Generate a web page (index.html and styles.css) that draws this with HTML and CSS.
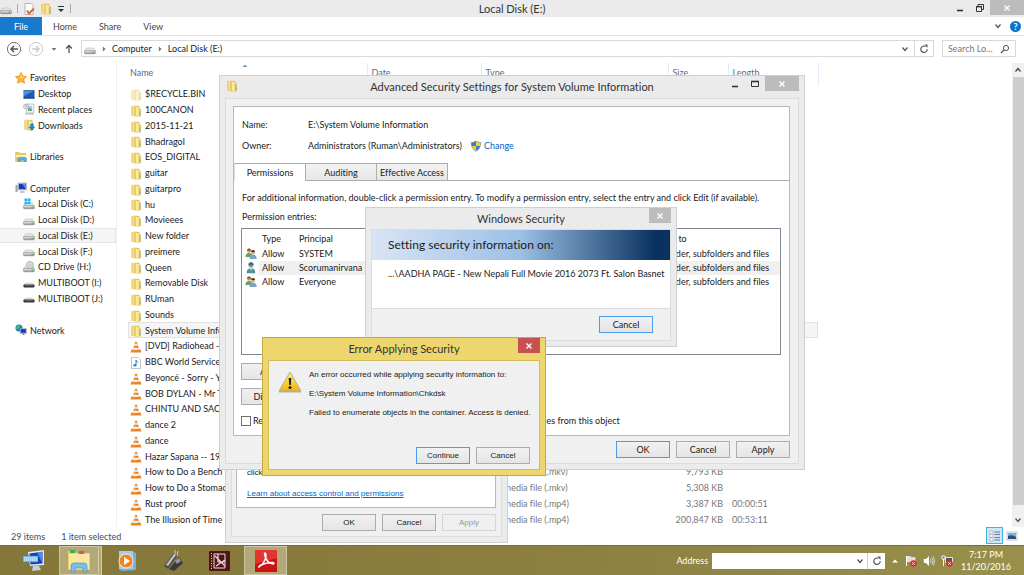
FILE: index.html
```html
<!DOCTYPE html>
<html lang="en">
<head>
<meta charset="utf-8">
<title>Local Disk (E:)</title>
<link rel="stylesheet" href="styles.css">
</head>
<body>
<svg class="sprite" aria-hidden="true">
  <defs>
    <linearGradient id="gold" x1="0" x2="1"><stop offset="0" stop-color="#e0b840"/><stop offset=".5" stop-color="#f9e79c"/><stop offset="1" stop-color="#dfbd55"/></linearGradient>
    <linearGradient id="metal" x1="0" x2="0" y1="0" y2="1"><stop offset="0" stop-color="#f4f4f4"/><stop offset="1" stop-color="#8d8d8d"/></linearGradient>
    <linearGradient id="cone" x1="0" x2="1"><stop offset="0" stop-color="#f9a13b"/><stop offset="1" stop-color="#dd6408"/></linearGradient>
    <linearGradient id="warn" x1="0" x2="0" y1="0" y2="1"><stop offset="0" stop-color="#fff27a"/><stop offset="1" stop-color="#f3b600"/></linearGradient>
  </defs>
  <symbol id="folder" viewBox="0 0 12 12"><path d="M1.500 1L5 .5v11l-3.500-.7z" fill="url(#gold)"/><path d="M5 .8h4.500v10.700H5z" fill="#e3c258"/><path d="M5.700 1.600l3 .6v8.600l-3 .6z" fill="#f8e8a4"/><path d="M9.200 3.500h1.600V11L9.200 11.500z" fill="#d9b554"/><path d="M9.800 7.500h1V9.500h-1z" fill="#8fb58a"/></symbol>
  <symbol id="drive" viewBox="0 0 12 12"><path d="M2.500 5h7L11.500 8H.5z" fill="#e9e9e9" stroke="#a8a8a8" stroke-width=".5"/><rect x=".5" y="7.500" width="11" height="3.300" rx="1" fill="url(#metal)" stroke="#7d7d7d" stroke-width=".5"/><path d="M8.500 8.700h2v1h-2z" fill="#37b34a"/></symbol>
  <symbol id="windrive" viewBox="0 0 12 12"><use href="#drive"/><path d="M1.500 .5h2.700v2.600H1.500zM4.700.5h2.800v2.600H4.700zM1.500 3.600h2.700v2.600H1.500zM4.700 3.600h2.800v2.600H4.700z" fill="#1fb3e8"/></symbol>
  <symbol id="cd" viewBox="0 0 12 12"><use href="#drive"/><circle cx="7" cy="4" r="3.500" fill="#d8dcdc" stroke="#8f9696" stroke-width=".6"/><circle cx="7" cy="4" r="1" fill="#fff" stroke="#8a8" stroke-width=".5"/></symbol>
  <symbol id="usb" viewBox="0 0 12 12"><path d="M2.500 5.500h7L11.500 8H.5z" fill="#ddd"/><rect x=".5" y="7.500" width="11" height="3" rx=".8" fill="#383838"/><path d="M2 8.500h8" stroke="#888" stroke-width=".5"/></symbol>
  <symbol id="star" viewBox="0 0 12 12"><path d="M6 .5l1.700 3.600 3.900.5-2.900 2.700.8 4L6 9.400l-3.500 1.900.8-4L.4 4.600l3.900-.5z" fill="#ffb52d" stroke="#ea8418" stroke-width=".7"/><path d="M6 2l1 3 3 .4-5 1z" fill="#ffe07c"/></symbol>
  <symbol id="desk" viewBox="0 0 12 12"><path d="M.5 2h11v8.500H.5z" fill="#215aab"/><path d="M1 2.500h10L1 8z" fill="#4f8edc"/><path d="M.5 9.500h11v1H.5z" fill="#143c7c"/></symbol>
  <symbol id="recent" viewBox="0 0 12 12"><path d="M3 1h8l-.5 9H3.500z" fill="#eef4fa" stroke="#9aa6b2" stroke-width=".6"/><path d="M5 3h4v5H5z" fill="#a9c7e5"/><path d="M5 6l2-1 2 2v1H5z" fill="#76a272"/><circle cx="3" cy="3.500" r="2.500" fill="#e4e9ee" stroke="#888" stroke-width=".5"/><path d="M3 2v1.700h1.200M2 11h9" stroke="#777" stroke-width=".6" fill="none"/></symbol>
  <symbol id="down" viewBox="0 0 12 12"><use href="#folder"/><path d="M7.500 5h2.500v3h1.800L8.700 11.500 5.700 8h1.800z" fill="#1c8ddb" stroke="#0b64a8" stroke-width=".4"/></symbol>
  <symbol id="libs" viewBox="0 0 12 12"><path d="M.7 1.500h3.500l1 1h5.500v8H.7z" fill="#eccb60" stroke="#c8a23a" stroke-width=".5"/><path d="M1 4h10.500v2H1z" fill="#fff2b4"/><path d="M3 7c2-1 6-1 8.500 0v3.500H9V9H5.500v1.500H3z" fill="#5aaee2" stroke="#2e7fb9" stroke-width=".4"/></symbol>
  <symbol id="pc" viewBox="0 0 12 12"><path d="M.5 3h2v7h-2z" fill="#9ba3ab"/><path d="M3 1h8.500v7H3z" fill="#d9dee6" stroke="#8a8f98" stroke-width=".5"/><path d="M3.800 1.800h7v5.400h-7z" fill="#1b35b8"/><path d="M7 1.800h3.800v5.400z" fill="#5f87ee"/><path d="M5 9.500h4.500v1H5z" fill="#999"/></symbol>
  <symbol id="net" viewBox="0 0 12 12"><circle cx="4" cy="4" r="3.500" fill="#1c7bd2"/><path d="M1.500 2.500Q3 .8 4.700 1l.6 1.500L3 5 1 5zM4 6l2-1v2z" fill="#4fc252"/><path d="M5 4.500h6.500v5H5z" fill="#cfd7e2" stroke="#7b8796" stroke-width=".4"/><path d="M5.700 5.100h5.200v3.700H5.700z" fill="#1735be"/><path d="M7.500 9.500h2v1.500h-2z" fill="#7a8592"/></symbol>
  <symbol id="vlc" viewBox="0 0 12 12"><path d="M1.500 8.500h9l1 3H.5z" fill="#f0861c"/><path d="M5.200.8h1.600L9.500 9.200Q6 10.800 2.500 9.200z" fill="url(#cone)"/><path d="M4.600 2.800h2.800l.7 2H3.900zM3.200 6.800h5.600l.6 1.700Q6 9.600 2.600 8.500z" fill="#eef0f2"/></symbol>
  <symbol id="music" viewBox="0 0 12 12"><path d="M1.500.6h7l2 2v8.900h-9z" fill="#fff" stroke="#999" stroke-width=".6"/><path d="M6 3v5M6 3q.3 1.500 2 2.500" stroke="#1789d6" stroke-width="1" fill="none"/><ellipse cx="4.900" cy="8.300" rx="1.500" ry="1.200" fill="#1789d6"/></symbol>
  <symbol id="group" viewBox="0 0 12 12"><circle cx="4" cy="2.800" r="2" fill="#c79c6b"/><path d="M2 2.500Q2 .5 4 .5t2 2z" fill="#6d5125"/><path d="M.5 9Q.5 5 4 5t3.500 4z" fill="#6aa05c"/><circle cx="8" cy="4.300" r="2" fill="#d7a67a"/><path d="M6 4Q6 2 8 2t2 2z" fill="#4c3524"/><path d="M4.500 11Q4.500 6.600 8 6.600T11.700 11z" fill="#7ba0c9"/></symbol>
  <symbol id="user" viewBox="0 0 12 12"><circle cx="6" cy="3" r="2.500" fill="#7c9ca0"/><path d="M3.500 3Q3.300.3 6 .3T8.500 3z" fill="#47686e"/><path d="M1.700 11.300Q1.500 6.300 6 6.300t4.300 5z" fill="#4f9490"/><path d="M5 6.300h2L6 9z" fill="#e5efef"/></symbol>
  <symbol id="shield" viewBox="0 0 12 12"><path d="M6 .4Q8.500 2 11.300 2 11.500 8.500 6 11.700.5 8.500.7 2 3.500 2 6 .4z" fill="#9ba2a8"/><path d="M6 1.600V6H1.900Q1.600 4.500 1.700 2.900 4 2.800 6 1.600zM6 6h4.100Q9.300 8.800 6 10.600z" fill="#2b7fd8"/><path d="M6 1.600V6h4.100q.4-1.500.2-3.100Q8 2.800 6 1.600zM6 6H1.900Q2.700 8.800 6 10.600z" fill="#f6cf2c"/></symbol>
  <symbol id="close" viewBox="0 0 8 8"><path d="M1.500 1.500l5 5m0-5l-5 5" stroke="#fff" stroke-width="1.400" fill="none"/></symbol>
  <symbol id="min" viewBox="0 0 10 10"><path d="M2 7.500h6" stroke="currentColor" stroke-width="1.600"/></symbol>
  <symbol id="max" viewBox="0 0 10 10"><path d="M1.500 2.500h7v5h-7z" fill="none" stroke="currentColor"/><path d="M1 2.500h8" stroke="currentColor" stroke-width="1.600"/></symbol>
  <symbol id="restore" viewBox="0 0 10 10"><path d="M1.500 3.500h5v5h-5zM3 3V1.500h5.500v5H7" fill="none" stroke="currentColor"/><path d="M1 3.700h6" stroke="currentColor" stroke-width="1.400"/></symbol>
  <symbol id="chev" viewBox="0 0 8 8"><path d="M1.500 2.500L4 5.500l2.500-3" fill="none" stroke="currentColor" stroke-width="1.300"/></symbol>
  <symbol id="tri" viewBox="0 0 8 8"><path d="M1.500 3h5L4 5.800z" fill="currentColor"/></symbol>
  <symbol id="crumb" viewBox="0 0 8 8"><path d="M2.800 1.500L5.600 4 2.800 6.500z" fill="currentColor"/></symbol>
  <symbol id="refresh" viewBox="0 0 10 10"><path d="M8.200 5.200A3.200 3.200 0 1 1 6.500 2.400" fill="none" stroke="currentColor" stroke-width="1.200"/><path d="M5.500.5h3v3.200z" fill="currentColor"/></symbol>
  <symbol id="badge" viewBox="0 0 12 12"><circle cx="8.500" cy="8.500" r="3.200" fill="#e02b25"/><path d="M7.300 7.300l2.400 2.400m0-2.400L7.300 9.700" stroke="#fff" stroke-width=".9"/></symbol>
</svg>

<div class="desktop">
  <main class="explorer">
    <header class="titlebar">
      <div class="quick">
        <svg class="i12"><use href="#drive"/></svg><i class="bar"></i>
        <svg class="i12" viewBox="0 0 12 12"><path d="M2 .5h6l2 2v9H2z" fill="#fff" stroke="#999" stroke-width=".7"/><path d="M4 7.500l2 3 5-5" fill="none" stroke="#e8622c" stroke-width="2"/></svg>
        <svg class="i12"><use href="#folder"/></svg>
        <svg class="i8" viewBox="0 0 8 8"><path d="M1 1.500h6" stroke="#333"/><path d="M1 4h6L4 7z" fill="#333"/></svg><i class="bar"></i>
      </div>
      <h1>Local Disk (E:)</h1>
      <div class="winbtns">
        <button aria-label="Minimize"><svg class="i10"><use href="#min"/></svg></button>
        <button aria-label="Restore"><svg class="i10"><use href="#restore"/></svg></button>
        <button class="x wide" aria-label="Close"><svg class="i8"><use href="#close"/></svg></button>
      </div>
    </header>
    <nav class="ribbon">
      <button class="file">File</button><button>Home</button><button>Share</button><button>View</button>
      <span class="ribbon-end"><svg class="i8"><use href="#chev"/></svg><button class="help" aria-label="Help">?</button></span>
    </nav>
    <div class="addressbar">
      <div class="arrows">
        <svg class="i16" viewBox="0 0 16 16"><circle cx="8" cy="8" r="6.600" fill="none" stroke="#747474"/><path d="M12 8H5m3-3L5 8l3 3" fill="none" stroke="#555" stroke-width="1.500"/></svg>
        <svg class="i16" viewBox="0 0 16 16"><circle cx="8" cy="8" r="6.600" fill="none" stroke="#ccc"/><path d="M4 8h7M8 5l3 3-3 3" fill="none" stroke="#ccc" stroke-width="1.500"/></svg>
        <svg class="i8 grey"><use href="#tri"/></svg>
        <svg class="i10" viewBox="0 0 10 10"><path d="M5 9V1.500M2 4.500l3-3 3 3" fill="none" stroke="#555" stroke-width="1.300"/></svg>
      </div>
      <div class="path">
        <svg class="i12"><use href="#drive"/></svg><svg class="i8 grey"><use href="#crumb"/></svg><a href="#computer">Computer</a><svg class="i8 grey"><use href="#crumb"/></svg><a href="#e">Local Disk (E:)</a>
        <span class="path-end"><svg class="i8"><use href="#chev"/></svg><button aria-label="Refresh"><svg class="i10"><use href="#refresh"/></svg></button></span>
      </div>
      <label class="search"><input type="text" placeholder="Search Lo..." aria-label="Search Local Disk (E:)"><svg class="i10" viewBox="0 0 10 10"><circle cx="6" cy="4" r="2.600" fill="none" stroke="#555"/><path d="M4 6L1 9" stroke="#555" stroke-width="1.300"/></svg></label>
    </div>
    <div class="content">
      <nav class="tree">
        <a class="root" href="#fav"><svg class="i12"><use href="#star"/></svg>Favorites</a>
        <a href="#desktop"><svg class="i12"><use href="#desk"/></svg>Desktop</a>
        <a href="#recent-places"><svg class="i12"><use href="#recent"/></svg>Recent places</a>
        <a href="#downloads"><svg class="i12"><use href="#down"/></svg>Downloads</a>
        <i></i>
        <a class="root" href="#libraries"><svg class="i12"><use href="#libs"/></svg>Libraries</a>
        <i></i>
        <a class="root" href="#computer"><svg class="i12"><use href="#pc"/></svg>Computer</a>
        <a href="#c"><svg class="i12"><use href="#windrive"/></svg>Local Disk (C:)</a>
        <a href="#d"><svg class="i12"><use href="#drive"/></svg>Local Disk (D:)</a>
        <a class="current" href="#e"><svg class="i12"><use href="#drive"/></svg>Local Disk (E:)</a>
        <a href="#f"><svg class="i12"><use href="#drive"/></svg>Local Disk (F:)</a>
        <a href="#h"><svg class="i12"><use href="#cd"/></svg>CD Drive (H:)</a>
        <a href="#i"><svg class="i12"><use href="#usb"/></svg>MULTIBOOT (I:)</a>
        <a href="#j"><svg class="i12"><use href="#usb"/></svg>MULTIBOOT (J:)</a>
        <i></i>
        <a class="root" href="#network"><svg class="i12"><use href="#net"/></svg>Network</a>
      </nav>
      <div class="list">
        <table class="files">
          <colgroup><col class="c-name"><col class="c-date"><col class="c-type"><col class="c-size"><col class="c-len"></colgroup>
          <thead><tr><th class="sorted">Name<svg class="i8 sort" viewBox="0 0 8 8"><path d="M1.500 5h5L4 2.500z" fill="#6c9cc0"/></svg></th><th>Date</th><th>Type</th><th>Size</th><th>Length</th></tr></thead>
          <tbody>
            <tr class="faded"><td><svg class="i12"><use href="#folder"/></svg>$RECYCLE.BIN</td><td></td><td></td><td></td><td></td></tr>
            <tr><td><svg class="i12"><use href="#folder"/></svg>100CANON</td><td></td><td></td><td></td><td></td></tr>
            <tr><td><svg class="i12"><use href="#folder"/></svg>2015-11-21</td><td></td><td></td><td></td><td></td></tr>
            <tr><td><svg class="i12"><use href="#folder"/></svg>Bhadragol</td><td></td><td></td><td></td><td></td></tr>
            <tr><td><svg class="i12"><use href="#folder"/></svg>EOS_DIGITAL</td><td></td><td></td><td></td><td></td></tr>
            <tr><td><svg class="i12"><use href="#folder"/></svg>guitar</td><td></td><td></td><td></td><td></td></tr>
            <tr><td><svg class="i12"><use href="#folder"/></svg>guitarpro</td><td></td><td></td><td></td><td></td></tr>
            <tr><td><svg class="i12"><use href="#folder"/></svg>hu</td><td></td><td></td><td></td><td></td></tr>
            <tr><td><svg class="i12"><use href="#folder"/></svg>Movieees</td><td></td><td></td><td></td><td></td></tr>
            <tr><td><svg class="i12"><use href="#folder"/></svg>New folder</td><td></td><td></td><td></td><td></td></tr>
            <tr><td><svg class="i12"><use href="#folder"/></svg>preimere</td><td></td><td></td><td></td><td></td></tr>
            <tr><td><svg class="i12"><use href="#folder"/></svg>Queen</td><td></td><td></td><td></td><td></td></tr>
            <tr><td><svg class="i12"><use href="#folder"/></svg>Removable Disk</td><td></td><td></td><td></td><td></td></tr>
            <tr><td><svg class="i12"><use href="#folder"/></svg>RUman</td><td></td><td></td><td></td><td></td></tr>
            <tr><td><svg class="i12"><use href="#folder"/></svg>Sounds</td><td></td><td></td><td></td><td></td></tr>
            <tr class="selected"><td><svg class="i12"><use href="#folder"/></svg>System Volume Information</td><td></td><td></td><td></td><td></td></tr>
            <tr><td><svg class="i12"><use href="#vlc"/></svg>[DVD] Radiohead -</td><td></td><td></td><td></td><td></td></tr>
            <tr><td><svg class="i12"><use href="#music"/></svg>BBC World Service</td><td></td><td></td><td></td><td></td></tr>
            <tr><td><svg class="i12"><use href="#vlc"/></svg>Beyoncé - Sorry - Y</td><td></td><td></td><td></td><td></td></tr>
            <tr><td><svg class="i12"><use href="#vlc"/></svg>BOB DYLAN - Mr T</td><td></td><td></td><td></td><td></td></tr>
            <tr><td><svg class="i12"><use href="#vlc"/></svg>CHINTU AND SAC..</td><td></td><td></td><td></td><td></td></tr>
            <tr><td><svg class="i12"><use href="#vlc"/></svg>dance 2</td><td></td><td></td><td></td><td></td></tr>
            <tr><td><svg class="i12"><use href="#vlc"/></svg>dance</td><td></td><td></td><td></td><td></td></tr>
            <tr><td><svg class="i12"><use href="#vlc"/></svg>Hazar Sapana -- 19</td><td></td><td></td><td></td><td></td></tr>
            <tr><td><svg class="i12"><use href="#vlc"/></svg>How to Do a Bench</td><td></td><td>VLC media file (.mkv)</td><td>9,793 KB</td><td></td></tr>
            <tr><td><svg class="i12"><use href="#vlc"/></svg>How to Do a Stomach</td><td></td><td>VLC media file (.mkv)</td><td>5,308 KB</td><td></td></tr>
            <tr><td><svg class="i12"><use href="#vlc"/></svg>Rust proof</td><td></td><td>VLC media file (.mp4)</td><td>3,387 KB</td><td>00:00:51</td></tr>
            <tr><td><svg class="i12"><use href="#vlc"/></svg>The Illusion of Time</td><td></td><td>VLC media file (.mp4)</td><td>200,847 KB</td><td>00:53:11</td></tr>
          </tbody>
        </table>
      </div>
      <div class="scroll"><svg class="i8" viewBox="0 0 8 8"><path d="M1.500 5.500L4 2.500l2.500 3" fill="none" stroke="#444" stroke-width="1.300"/></svg><i class="thumb"></i><svg class="i8"><use href="#chev"/></svg></div>
    </div>
    <footer class="status">
      <span>29 items</span><span>1 item selected</span>
      <div class="views">
        <button class="on" aria-label="Details view"><svg class="i12" viewBox="0 0 12 12"><path d="M1 .8h3v10.400H1z" fill="#fff" stroke="#89a" stroke-width=".6"/><path d="M1.500 4h2m-2 3.500h2" stroke="#c76"/><path d="M5.500 2H11M5.500 4.500H11M5.500 7.500H11M5.500 10H11" stroke="#557" stroke-width=".8"/></svg></button>
        <button aria-label="Large icons view"><svg class="i12" viewBox="0 0 12 12"><path d="M1 2h10v8H1z" fill="#fff" stroke="#99a" stroke-width=".6"/><path d="M2 3h8v4H2z" fill="#6fb4e5"/><path d="M2 6q4-2 8 1v2H2z" fill="#27517c"/></svg></button>
      </div>
    </footer>
  </main>

  <footer class="taskbar">
    <button class="task" aria-label="On-screen keyboard"><svg class="i24" viewBox="0 0 24 24"><path d="M6 3l16-2v15l-14 1z" fill="#e2e8f2"/><path d="M7.500 4.500l13-1.700v11.700l-12 1z" fill="#153db8"/><path d="M15 3.600l5.500-.8v11.700z" fill="#4e88ef"/><path d="M11 17h6l2 4-9 1z" fill="#c9ced8"/><path d="M1 7h15v6H1z" fill="#8bc9ef" stroke="#3a88c8" stroke-width=".6"/><path d="M2 9h13M2 11h13" stroke="#fff" stroke-dasharray="1 1" stroke-width=".8"/></svg></button>
    <button class="task active stack" aria-label="File Explorer"><svg class="i26" viewBox="0 0 26 26"><path d="M2 3h7l2 2h13v17H2z" fill="#f0cf68"/><path d="M4 2h5v3H4z" fill="#47a84f"/><path d="M13 3h5v3h-5z" fill="#d8574a"/><path d="M3 6h20v15H3z" fill="#fae8a0"/><path d="M5 24v-6q0-3 3-3h10q3 0 3 3v6h-4v-4H9v4z" fill="#79bfe6" stroke="#4794c6" stroke-width=".7"/></svg></button>
    <button class="task" aria-label="Media Player"><svg class="i24" viewBox="0 0 24 24"><path d="M4 2l14 1 3 1v17l-14 1-3-2z" fill="#6cb5dd"/><path d="M4 2h14v18H4z" fill="#9ccfe9"/><circle cx="11" cy="12" r="7" fill="#f5821f" stroke="#fff" stroke-width=".8"/><path d="M9 8l6 4-6 4z" fill="#fff"/></svg></button>
    <button class="task" aria-label="Pen tool"><svg class="i24" viewBox="0 0 24 24"><path d="M3 17L13 4l4 2L7 20z" fill="#4a4d50"/><path d="M5 16l8-11 2 1-8 11z" fill="#bfc3c6"/><path d="M8 20L18 8l4 6-9 8z" fill="#383a3c"/><path d="M14 12l4-3 2 3-4 3z" fill="#92979a"/><path d="M14 1v5M17 2l-1 5" stroke="#ccc"/></svg></button>
    <button class="task" aria-label="Photo editor"><svg class="i24" viewBox="0 0 24 24"><rect x="2" y="2" width="21" height="20" rx="1" fill="#511517"/><path d="M7 5h11v14H7z" fill="none" stroke="#eadddd"/><path d="M8 7l10 10M18 11L9 17M11 5v8h7" stroke="#eadddd" stroke-width="1.200" fill="none"/><path d="M4.500 4v16" stroke="#ddc" stroke-dasharray="1 1.500"/></svg></button>
    <button class="task active" aria-label="PDF Reader"><svg class="i24" viewBox="0 0 24 24"><path d="M1 1h22v22H1z" fill="#c91412"/><path d="M1 1h22v8L1 15z" fill="#e23430"/><path d="M5 18q6-4 7-11 0-3-1-3t0 3q2 7 8 8 2-.5 0-1.500-6-.5-13 3-2 2-1 1.500z" fill="none" stroke="#fff" stroke-width="1.500"/></svg></button>
    <div class="tray">
      <label for="addr">Address</label>
      <div class="addr"><input id="addr" type="text"><svg class="i8"><use href="#chev"/></svg><button aria-label="Go"><svg class="i10"><use href="#refresh"/></svg></button></div>
      <svg class="i8 white" viewBox="0 0 8 8"><path d="M1 5.500h6L4 2.500z" fill="currentColor"/></svg>
      <svg class="i12" viewBox="0 0 12 12"><path d="M1.500 1v10" stroke="#fff"/><path d="M2 1.500h3.500l1 1H10v5H6l-1-1H2z" fill="#ddd" stroke="#fff" stroke-width=".6"/><use href="#badge"/></svg>
      <svg class="i12" viewBox="0 0 12 12"><path d="M.8 4H3l3-3v10L3 8H.8z" fill="#fff"/><path d="M7.500 4q1 2 0 4M9 2.500q2 3.500 0 7M10.500 1.500q2 4.500 0 9" fill="none" stroke="#eee" stroke-width=".7"/></svg>
      <svg class="i12" viewBox="0 0 12 12"><path d="M4.500 2.500h7v5h-7z" fill="#555" stroke="#fff" stroke-width=".8"/><path d="M1 1h3v3H1zM2.500 4v7" fill="#777" stroke="#fff" stroke-width=".9"/><use href="#badge"/></svg>
      <time>7:17 PM<br>11/20/2016</time>
    </div>
  </footer>

  <section class="win properties">
    <div class="client">
      <div class="sheet"><p>click Advanced.</p><a href="#learn">Learn about access control and permissions</a></div>
      <div class="actions"><button class="btn">OK</button><button class="btn">Cancel</button><button class="btn" disabled>Apply</button></div>
    </div>
  </section>

  <section class="win advanced">
    <header class="wtitle">
      <svg class="i12"><use href="#folder"/></svg><h2>Advanced Security Settings for System Volume Information</h2>
      <div class="winbtns"><button aria-label="Minimize"><svg class="i10"><use href="#min"/></svg></button><button aria-label="Maximize"><svg class="i10"><use href="#max"/></svg></button><button class="x wide" aria-label="Close"><svg class="i8"><use href="#close"/></svg></button></div>
    </header>
    <div class="client">
      <div class="sheet">
        <dl class="facts">
          <dt>Name:</dt><dd>E:\System Volume Information</dd>
          <dt>Owner:</dt><dd>Administrators (Ruman\Administrators)<a href="#owner"><svg class="i12"><use href="#shield"/></svg>Change</a></dd>
        </dl>
        <div class="tabs" role="tablist"><button class="open" role="tab">Permissions</button><button role="tab">Auditing</button><button role="tab">Effective Access</button></div>
        <div class="tabpage">
          <p>For additional information, double-click a permission entry. To modify a permission entry, select the entry and click Edit (if available).</p>
          <p>Permission entries:</p>
          <div class="entries">
            <table>
              <colgroup><col class="e-icon"><col class="e-type"><col class="e-who"><col class="e-to"></colgroup>
              <thead><tr><th></th><th>Type</th><th>Principal</th><th>Applies to</th></tr></thead>
              <tbody>
                <tr><td><svg class="i12"><use href="#group"/></svg></td><td>Allow</td><td>SYSTEM</td><td>This folder, subfolders and files</td></tr>
                <tr class="picked"><td><svg class="i12"><use href="#user"/></svg></td><td>Allow</td><td>Scorumanirvana</td><td>This folder, subfolders and files</td></tr>
                <tr><td><svg class="i12"><use href="#group"/></svg></td><td>Allow</td><td>Everyone</td><td>This folder, subfolders and files</td></tr>
              </tbody>
            </table>
          </div>
          <div class="actions start"><button class="btn">Add</button></div>
          <div class="actions start"><button class="btn">Disable</button></div>
          <label class="check"><input type="checkbox">Replace all child object permission entries with inheritable permission entries from this object</label>
        </div>
      </div>
      <div class="actions"><button class="btn default">OK</button><button class="btn">Cancel</button><button class="btn">Apply</button></div>
    </div>
  </section>

  <section class="win security">
    <header class="wtitle"><span></span><h2>Windows Security</h2><div class="winbtns"><button class="x" aria-label="Close"><svg class="i8"><use href="#close"/></svg></button></div></header>
    <div class="client">
      <h3>Setting security information on:</h3>
      <p>...\AADHA PAGE - New Nepali Full Movie 2016 2073 Ft. Salon Basnet</p>
      <div class="actions"><button class="btn default">Cancel</button></div>
    </div>
  </section>

  <section class="win error">
    <header class="wtitle"><span></span><h2>Error Applying Security</h2><div class="winbtns"><button class="x" aria-label="Close"><svg class="i8"><use href="#close"/></svg></button></div></header>
    <div class="client">
      <div class="message">
        <svg class="i24" viewBox="0 0 24 24"><path d="M1 21.500h22" stroke="#aaa" stroke-width="2"/><path d="M12 2L23 21H1z" fill="url(#warn)" stroke="#b4b09a" stroke-linejoin="round"/><path d="M10.700 8h2.600l-.5 7h-1.600z" fill="#222"/><circle cx="12" cy="17.500" r="1.500" fill="#222"/></svg>
        <div><p>An error occurred while applying security information to:</p><p>E:\System Volume Information\Chkdsk</p><p>Failed to enumerate objects in the container. Access is denied.</p></div>
      </div>
      <div class="actions"><button class="btn default">Continue</button><button class="btn">Cancel</button></div>
    </div>
  </section>
</div>
</body>
</html>
```
FILE: styles.css
```css
* { box-sizing: border-box; }
body { margin: 0; font: 9px/15px Lato, "Open Sans", sans-serif; font-variant-ligatures: none; color: #1a1a1a; background: #fff; }
h1, h2, h3, p, dl, dd { margin: 0; font-weight: 400; }
h1, h2 { font-size: 11px; line-height: 17px; color: #333; white-space: nowrap; }
a { color: inherit; text-decoration: none; }
button, input { font: inherit; font-variant-ligatures: none; color: inherit; margin: 0; padding: 0; border: 0; background: none; }
svg { display: block; flex: none; color: #555; }
table { border-collapse: collapse; table-layout: fixed; }
th, td { padding: 0; text-align: left; font-weight: 400; white-space: nowrap; }
.sprite { position: absolute; width: 0; height: 0; }
.i8 { width: 8px; height: 8px; }
.i10 { width: 10px; height: 10px; }
.i12 { width: 12px; height: 12px; }
.i16 { width: 16px; height: 16px; }
.i24 { width: 24px; height: 24px; }
.i26 { width: 26px; height: 26px; }
.grey { color: #777; }
.white { color: #fff; }

.desktop { position: relative; display: flex; flex-direction: column; height: 100vh; overflow: hidden; }
.explorer { flex: 1; min-height: 0; display: flex; flex-direction: column; background: #fff; }

.titlebar { display: grid; grid-template-columns: 1fr auto 1fr; height: 17px; background: #ebebeb; }
.quick { display: flex; align-items: center; gap: 5px; }
.bar { width: 1px; height: 9px; background: #aaa; }
.winbtns { display: flex; justify-content: flex-end; align-items: flex-start; }
.winbtns button { display: flex; align-items: center; justify-content: center; width: 20px; height: 15px; }
.winbtns svg { color: #333; }
.winbtns .x { width: 22px; background: #bcbcbc; }
.winbtns .x.wide { width: 34px; }

.ribbon { display: flex; height: 19px; border-bottom: 1px solid #e3e3e3; color: #444; }
.ribbon > button { padding: 0 11px; }
.ribbon > .file { width: 42px; padding: 0; background: #1979ca; color: #fff; }
.ribbon-end { display: flex; align-items: center; gap: 8px; margin-left: auto; padding-right: 3px; }
.help { width: 11px; height: 11px; border-radius: 50%; background: #1272c9; color: #fff; font-weight: 700; line-height: 11px; }

.addressbar { display: flex; align-items: center; gap: 8px; height: 27px; padding: 0 8px 2px 6px; }
.arrows { display: flex; align-items: center; gap: 6px; width: 67px; }
.path { display: flex; flex: 1; align-items: center; gap: 4px; height: 17px; padding-left: 2px; border: 1px solid #d9d9d9; }
.path-end { display: flex; align-items: center; gap: 5px; height: 100%; margin-left: auto; }
.path-end button { display: flex; align-items: center; justify-content: center; width: 19px; height: 100%; border-left: 1px solid #d9d9d9; }
.search { display: flex; align-items: center; width: 74px; height: 17px; padding: 0 5px; border: 1px solid #d9d9d9; }
.search input { flex: 1; min-width: 0; }
.search input::placeholder { color: #777; }

.content { flex: 1; display: flex; min-height: 0; }
.tree { display: grid; grid-template-rows: repeat(29, 1fr); width: 116px; flex: none; padding-top: 7px; }
.tree a { display: flex; align-items: center; gap: 3px; padding-left: 23px; min-height: 0; white-space: nowrap; }
.tree .root { padding-left: 15px; }
.tree .current { background: #f5f5f5; border: 1px solid #e6e6e6; border-left: 0; }
.list { flex: 1; min-width: 0; padding-left: 11px; border-left: 1px solid #f0f0f0; }
.files { width: 690px; height: 100%; }
.c-name { width: 239px; } .c-date { width: 114px; } .c-type { width: 187px; } .c-size { width: 60px; } .c-len { width: 90px; }
.files th { height: 23px; padding: 2px 0 0 4px; border-right: 1px solid #e2ecf7; color: #5a6b85; line-height: 15px; vertical-align: top; }
.files th:first-child { padding-left: 2px; }
.sort { position: absolute; left: 241px; top: 62px; }
.files td { padding-left: 4px; line-height: 15px; color: #777; }
.files td:first-child { padding-left: 2px; color: #1a1a1a; }
.files td svg { display: inline-block; vertical-align: middle; margin-right: 3px; }
.files td:nth-child(4) { padding-right: 5px; text-align: right; }
.faded svg { opacity: .5; }
.selected { background: #f5f5f5; outline: 1px solid #e2e2e2; outline-offset: -1px; }
.scroll { display: flex; flex-direction: column; align-items: center; gap: 3px; width: 12px; padding: 3px 0; background: #f0f0f0; }
.thumb { flex: 1; width: 11px; margin-bottom: 8px; background: #cdcdcd; }

.status { display: flex; height: 18px; padding-left: 11px; line-height: 20px; color: #3c4d68; }
.status span { margin-right: 8px; padding-right: 8px; }
.status span + span { margin: 0; }
.views { display: flex; margin-left: auto; padding: 0 4px 1px 0; }
.views button { display: flex; align-items: center; justify-content: center; width: 17px; }
.views .on { background: #cde9f8; border: 1px solid #46b1e1; }

.taskbar { display: flex; flex: none; height: 30px; padding-left: 11px; background: linear-gradient(90deg, #857639, #8b7e3f 50%, #98904c); border-top: 1px solid #7a6d37; }
.task { display: flex; align-items: center; justify-content: center; width: 46px; }
.task.active { width: 43px; margin: 0 2px; background: #b2a878; border: 1px solid #cdc59f; }
.task.active.stack { border-right: 4px double #d5cda8; }
.tray { display: flex; align-items: center; gap: 6px; margin-left: auto; padding-right: 13px; color: #fff; }
.tray label { margin-right: -2px; }
.addr { display: flex; align-items: center; width: 173px; height: 16px; background: #fff; color: #222; }
.addr input { flex: 1; min-width: 0; height: 100%; }
.addr button { display: flex; align-items: center; justify-content: center; width: 18px; height: 100%; margin-left: 3px; border-left: 1px solid #ccc; }
.tray time { margin-left: 2px; text-align: center; line-height: 12px; }

.win { position: absolute; padding: 0 5px 5px; background: #ebebeb; border: 1px solid #cfcfcf; }
.wtitle { display: grid; grid-template-columns: 1fr auto 1fr; height: 22px; }
.wtitle h2 { line-height: 22px; }
.wtitle > svg { margin: 4px 0 0 1px; }
.client { background: #f0f0f0; border: 1px solid #dcdcdc; }
.sheet { background: #fff; border: 1px solid #b8b8b8; }
.actions { display: flex; justify-content: flex-end; gap: 6px; }
.actions.start { justify-content: flex-start; }
.btn { width: 54px; height: 17px; border: 1px solid #acacac; background: linear-gradient(#f1f1f1, #e5e5e5); line-height: 15px; white-space: nowrap; }
.btn.default { border-color: #4a9cec; }
.btn:disabled { color: #999; border-color: #d5d5d5; background: #efefef; }

.properties, .error { font-family: "Liberation Sans", sans-serif; font-size: 8px; }
.properties { left: 225px; top: 438px; width: 283px; }
.properties .client { padding: 20px 5px 5px 4px; border-top: 0; }
.properties .sheet { margin-bottom: 6px; padding: 5px 10px 6px; }
.properties .sheet p { margin-bottom: 6px; }
.properties .sheet a { color: #0066cc; text-decoration: underline; }

.advanced { left: 219px; top: 75px; width: 586px; }
.advanced > .client { padding: 7px 8px 5px 7px; }
.facts { display: grid; grid-template-columns: 66px 1fr; row-gap: 6px; padding: 10px 8px; }
.facts dd, .facts a { display: flex; align-items: center; }
.facts a { gap: 2px; margin-left: 8px; color: #0066cc; }
.tabs { display: flex; height: 18px; border-bottom: 1px solid #acacac; }
.tabs button { width: 72px; height: 18px; margin-right: -1px; border: 1px solid #acacac; background: linear-gradient(#f3f3f3, #e6e6e6); white-space: nowrap; }
.tabs .open { background: #fff; border-bottom-color: #fff; border-left-color: #ddd; }
.tabpage { padding: 9px 8px 7px 7px; }
.tabpage > p { margin-bottom: 4px; padding-left: 1px; white-space: nowrap; }
.entries { height: 127px; margin: 3px 0 8px; border: 1px solid #828790; }
.entries table { width: 100%; }
.e-icon { width: 17px; } .e-type { width: 37px; } .e-who { width: 348px; }
.entries th { height: 18px; padding-left: 3px; }
.entries td { height: 14px; padding-left: 3px; line-height: 14px; }
.picked td + td { background: #f0f0f0; }
.tabpage .actions { margin-bottom: 8px; }
.check { display: flex; align-items: center; gap: 2px; white-space: nowrap; }
.check input { appearance: none; width: 10px; height: 10px; border: 1px solid #707070; background: #fff; }
.advanced .client > .actions { padding-top: 5px; }

.security { left: 365px; top: 207px; width: 312px; }
.security .wtitle { height: 21px; }
.security h3 { padding: 0 16px; font-size: 12px; line-height: 30px; background: linear-gradient(90deg, #d9e4f4, #9bc0e6 50%, #0a3260 95%); }
.security p { height: 49px; padding: 6px 16px; background: #fff; border-bottom: 1px solid #dcdcdc; white-space: nowrap; }
.security .actions { padding: 7px 17px; }

.error { left: 262px; top: 337px; width: 284px; background: #ecd66d; border-color: #c4a93d; }
.error h2 { font-family: Lato, "Open Sans", sans-serif; }
.error .winbtns .x { background: #c75050; }
.error .client { padding: 4px 9px 5px; border-color: #d3bb55; }
.message { display: flex; gap: 7px; height: 82px; white-space: nowrap; }
.message svg { margin-top: 5px; }
.message p { margin-top: 2px; margin-bottom: 4px; }
```
